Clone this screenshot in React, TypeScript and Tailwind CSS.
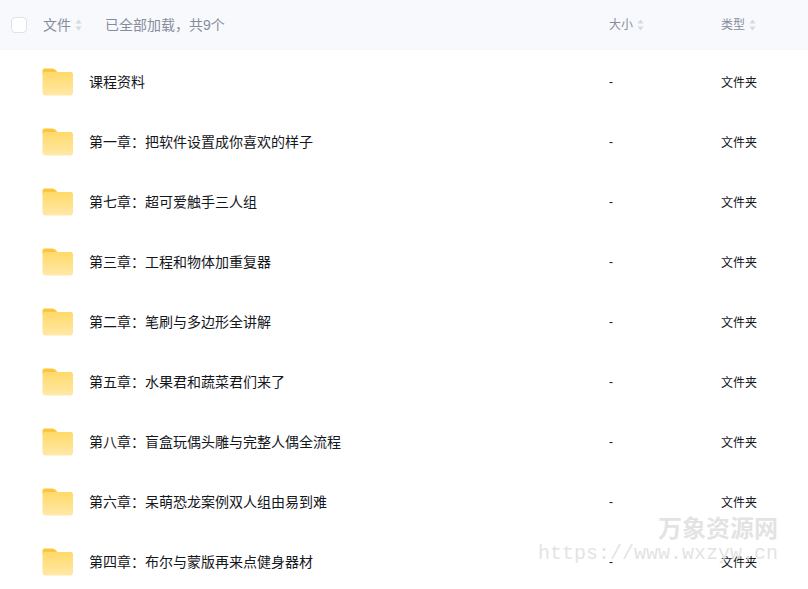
const files = [
  "课程资料",
  "第一章\uFF1A把软件设置成你喜欢的样子",
  "第七章\uFF1A超可爱触手三人组",
  "第三章\uFF1A工程和物体加重复器",
  "第二章\uFF1A笔刷与多边形全讲解",
  "第五章\uFF1A水果君和蔬菜君们来了",
  "第八章\uFF1A盲盒玩偶头雕与完整人偶全流程",
  "第六章\uFF1A呆萌恐龙案例双人组由易到难",
  "第四章\uFF1A布尔与蒙版再来点健身器材",
];

const SortIcon = () => (
  <svg width="7" height="12" viewBox="0 0 7 12" className="ml-1 shrink-0">
    <path d="M3.5 0.5 L6.5 4.5 H0.5 Z" fill="#d5d9e0" />
    <path d="M3.5 11.5 L6.5 7.5 H0.5 Z" fill="#d5d9e0" />
  </svg>
);

const FolderIcon = () => (
  <svg width="32" height="28" viewBox="0 0 32 28" className="shrink-0">
    <defs>
      <linearGradient id="folderBody" x1="0" y1="0" x2="0" y2="1">
        <stop offset="0" stopColor="#ffd968" />
        <stop offset="1" stopColor="#ffe9a8" />
      </linearGradient>
    </defs>
    <path d="M2.5 0.5 H10 C12 0.5 13 1.5 14 2.5 L15.5 4 H8 L0.5 6 V3 C0.5 1.5 1.2 0.5 2.5 0.5 Z" fill="#fcc63c" />
    <path d="M3 4 H28.5 C30.2 4 31 5 31 6.5 V24.5 C31 26.5 30 27.5 28 27.5 H3.5 C1.5 27.5 0.5 26.5 0.5 24.5 V6.5 C0.5 5 1.3 4 3 4 Z" fill="url(#folderBody)" />
  </svg>
);

export default function App() {
  return (
    <div className="relative w-[808px] h-[589px] overflow-hidden bg-white text-[14px] font-['Liberation_Sans','Noto_Sans_CJK_SC',sans-serif]">
      <div className="flex items-center h-[50px] pt-[1px] bg-[#f7f9fc] text-[#878c9c] border-b border-[#f6f7f9]">
        <div className="w-[16px] h-[16px] ml-[11px] rounded-[4px] border border-[#dfe2e8] bg-white" />
        <div className="flex items-center ml-[16px] w-[62px]">
          <span>文件</span>
          <SortIcon />
        </div>
        <span className="w-[504px]">已全部加载{"\uFF0C"}共9个</span>
        <div className="flex items-center w-[112px] text-[12px]">
          <span>大小</span>
          <SortIcon />
        </div>
        <div className="flex items-center text-[12px]">
          <span>类型</span>
          <SortIcon />
        </div>
      </div>

      <div className="pt-[2px]">
        {files.map((name) => (
          <div key={name} className="flex items-center h-[60px] text-[#14171c]">
            <div className="ml-[42px] w-[47px]">
              <FolderIcon />
            </div>
            <span className="w-[520px] whitespace-nowrap">{name}</span>
            <span className="w-[112px] text-[12px]">-</span>
            <span className="text-[12px] pt-[1px]">文件夹</span>
          </div>
        ))}
      </div>

      <div className="absolute left-[538px] top-[515px] w-[240px] flex flex-col items-end text-[#dcdcdc]/80 pointer-events-none">
        <span className="text-[24px] leading-[28px] font-bold">万象资源网</span>
        <span className="text-[20px] leading-[24px] mt-[-1px] font-['Liberation_Mono',monospace] whitespace-nowrap">https://www.wxzyw.cn</span>
      </div>
    </div>
  );
}
